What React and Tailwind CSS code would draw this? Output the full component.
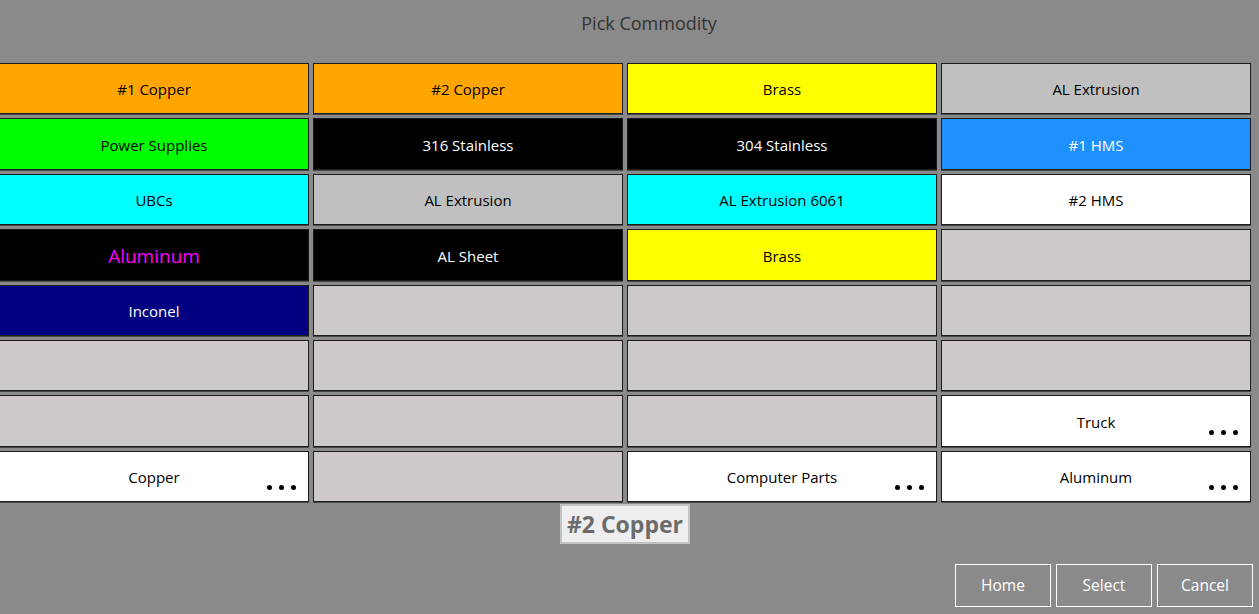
import React from "react";

const cells = [
  ["#1 Copper", "bg-[#ffa500] text-black"],
  ["#2 Copper", "bg-[#ffa500] text-black"],
  ["Brass", "bg-[#ffff00] text-black"],
  ["AL Extrusion", "bg-[#c0c0c0] text-black"],
  ["Power Supplies", "bg-[#00ff00] text-black"],
  ["316 Stainless", "bg-black text-white"],
  ["304 Stainless", "bg-black text-white"],
  ["#1 HMS", "bg-[#1e90ff] text-white"],
  ["UBCs", "bg-[#00ffff] text-black"],
  ["AL Extrusion", "bg-[#c0c0c0] text-black"],
  ["AL Extrusion 6061", "bg-[#00ffff] text-black"],
  ["#2 HMS", "bg-white text-black"],
  ["Aluminum", "bg-black text-[#ff00ff] text-[19px]"],
  ["AL Sheet", "bg-black text-white"],
  ["Brass", "bg-[#ffff00] text-black"],
  ["", "bg-[#ccc9c8]"],
  ["Inconel", "bg-[#000080] text-white"],
  ["", "bg-[#ccc9c8]"],
  ["", "bg-[#ccc9c8]"],
  ["", "bg-[#ccc9c8]"],
  ["", "bg-[#ccc9c8]"],
  ["", "bg-[#ccc9c8]"],
  ["", "bg-[#ccc9c8]"],
  ["", "bg-[#ccc9c8]"],
  ["", "bg-[#ccc9c8]"],
  ["", "bg-[#ccc9c8]"],
  ["", "bg-[#ccc9c8]"],
  ["Truck", "bg-white text-black", true],
  ["Copper", "bg-white text-black", true],
  ["", "bg-[#ccc9c8]"],
  ["Computer Parts", "bg-white text-black", true],
  ["Aluminum", "bg-white text-black", true],
];

function Dots() {
  return (
    <div className="absolute right-[12px] bottom-[11px] flex gap-[7px]">
      <span className="w-[5px] h-[5px] rounded-full bg-black" />
      <span className="w-[5px] h-[5px] rounded-full bg-black" />
      <span className="w-[5px] h-[5px] rounded-full bg-black" />
    </div>
  );
}

export default function App() {
  return (
    <div
      className="w-[1259px] h-[614px] bg-[#8a8a8a] overflow-hidden flex flex-col"
      style={{ fontFamily: '"Open Sans", "Noto Sans", sans-serif' }}
    >
      <div className="h-[63px] flex justify-center pl-[39px] pt-[9px]">
        <span className="text-[18px] text-[#333333] leading-[28px]">Pick Commodity</span>
      </div>
      <div className="ml-[-1px] w-[1252px] h-[439px] grid grid-cols-4 grid-rows-8 gap-[4px]">
        {cells.map(([label, cls, dots], i) => (
          <div
            key={i}
            className={`relative flex items-center justify-center pt-[2px] border border-[#1c1c1c] shadow-[0_1px_0_#4a4a4a] text-[15px] ${cls}`}
          >
            {label}
            {dots && <Dots />}
          </div>
        ))}
      </div>
      <div className="flex justify-center mt-[2px]">
        <div className="ml-[-9px] h-[40px] px-[5px] flex items-center border-2 border-[#c4c4c4] bg-[#eeeeee] text-[#6b6b6b] font-bold text-[23px]">
          #2 Copper
        </div>
      </div>
      <div className="flex justify-end gap-[5px] pr-[6px] mt-[20px]">
        <button className="w-[96px] h-[43px] border border-white text-white text-[15.5px]">Home</button>
        <button className="w-[96px] h-[43px] border border-white text-white text-[15.5px]">Select</button>
        <button className="w-[96px] h-[43px] border border-white text-white text-[15.5px]">Cancel</button>
      </div>
    </div>
  );
}
